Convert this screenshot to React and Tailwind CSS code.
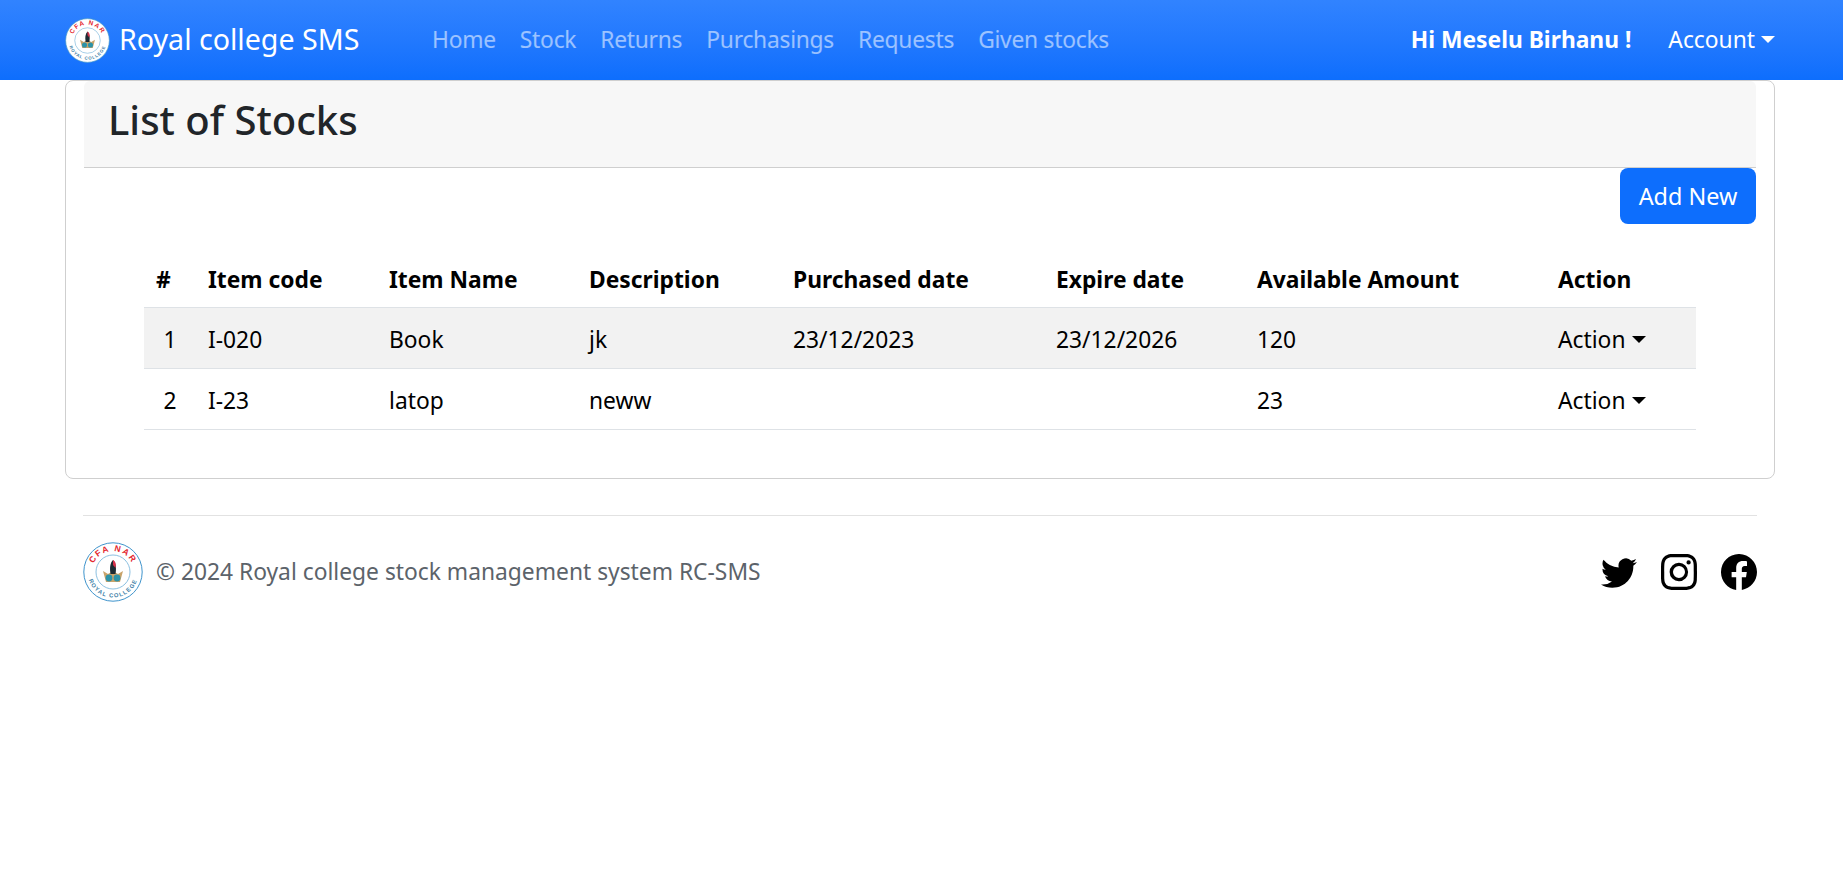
import React from 'react'

const font = "font-['Noto_Sans',sans-serif]"

const navLinks = ['Home', 'Stock', 'Returns', 'Purchasings', 'Requests', 'Given stocks']

const rows = [
  { n: 1, code: 'I-020', name: 'Book', desc: 'jk', bought: '23/12/2023', expire: '23/12/2026', amount: '120' },
  { n: 2, code: 'I-23', name: 'latop', desc: 'neww', bought: '', expire: '', amount: '23' },
]

function Caret({ className }) {
  return <span className={`inline-block ml-[6px] align-[5px] border-x-[7px] border-t-[7px] border-x-transparent ${className}`} />
}

// the college seal, drawn small; the ring text is real text on a path
function Logo({ size, id }) {
  return (
    <svg width={size} height={size} viewBox="0 0 60 60" className="shrink-0">
      <circle cx="30" cy="30" r="29.2" fill="#fff" stroke="#3f94cc" strokeWidth="1" />
      <circle cx="30" cy="30" r="17" fill="#fff" stroke="#6fb0d8" strokeWidth="0.8" />
      <defs>
        <path id={id + 'top'} d="M9 30a21 21 0 0 1 42 0" />
        <path id={id + 'bot'} d="M4.5 30a25.5 25.5 0 0 0 51 0" />
      </defs>
      <text fontSize="8.5" fontWeight="700" fill="#e3262e" fontFamily="Liberation Sans, sans-serif" letterSpacing="1.6">
        <textPath href={`#${id}top`} startOffset="50%" textAnchor="middle">CFA  NAR</textPath>
      </text>
      <text fontSize="5.8" fontWeight="700" fill="#3f7fa8" fontFamily="Liberation Sans, sans-serif" letterSpacing="1.1">
        <textPath href={`#${id}bot`} startOffset="50%" textAnchor="middle">ROYAL COLLEGE</textPath>
      </text>
      <path d="M20 29l3 11h14l3-11-5 3-5-3-5 3z" fill="#c9a36a" />
      <path d="M30 18c-3 3-3.5 8-2.5 14h5c1-6 .5-11-2.5-14z" fill="#1c2b33" />
      <path d="M30 18c2.5 1.5 3.5 4 2.5 8l-2.5-3z" fill="#d8304a" />
      <circle cx="26" cy="36" r="3.4" fill="#2c93a8" />
      <circle cx="34" cy="36" r="3.4" fill="#2c93a8" />
    </svg>
  )
}

const TwitterIcon = () => (
  <svg width="36" height="36" viewBox="0 0 16 16" fill="#000"><path d="M5.026 15c6.038 0 9.341-5.003 9.341-9.334q.002-.211-.006-.422A6.7 6.7 0 0 0 16 3.542a6.7 6.7 0 0 1-1.889.518 3.3 3.3 0 0 0 1.447-1.817 6.5 6.5 0 0 1-2.087.793A3.286 3.286 0 0 0 7.875 6.03a9.32 9.32 0 0 1-6.767-3.429 3.29 3.29 0 0 0 1.018 4.382A3.3 3.3 0 0 1 .64 6.575v.045a3.29 3.29 0 0 0 2.632 3.218 3.2 3.2 0 0 1-.865.115 3 3 0 0 1-.614-.057 3.28 3.28 0 0 0 3.067 2.277A6.6 6.6 0 0 1 .78 13.58a6 6 0 0 1-.78-.045A9.34 9.34 0 0 0 5.026 15" /></svg>
)

const InstagramIcon = () => (
  <svg width="36" height="36" viewBox="0 0 16 16" fill="#000"><path d="M8 0C5.829 0 5.556.01 4.703.048 3.85.088 3.269.222 2.76.42a3.9 3.9 0 0 0-1.417.923A3.9 3.9 0 0 0 .42 2.76C.222 3.268.087 3.85.048 4.7.01 5.555 0 5.827 0 8.001c0 2.172.01 2.444.048 3.297.04.852.174 1.433.372 1.942.205.526.478.972.923 1.417.444.445.89.719 1.416.923.51.198 1.09.333 1.942.372C5.555 15.99 5.827 16 8 16s2.444-.01 3.298-.048c.851-.04 1.434-.174 1.943-.372a3.9 3.9 0 0 0 1.416-.923c.445-.445.718-.891.923-1.417.197-.509.332-1.09.372-1.942C15.99 10.445 16 10.173 16 8s-.01-2.445-.048-3.299c-.04-.851-.175-1.433-.372-1.941a3.9 3.9 0 0 0-.923-1.417A3.9 3.9 0 0 0 13.24.42c-.51-.198-1.092-.333-1.943-.372C10.443.01 10.172 0 7.998 0zm-.717 1.442h.718c2.136 0 2.389.007 3.232.046.78.035 1.204.166 1.486.275.373.145.64.319.92.599s.453.546.598.92c.11.281.24.705.275 1.485.039.843.047 1.096.047 3.231s-.008 2.389-.047 3.232c-.035.78-.166 1.203-.275 1.485a2.5 2.5 0 0 1-.599.919c-.28.28-.546.453-.92.598-.28.11-.704.24-1.485.276-.843.038-1.096.047-3.232.047s-2.39-.009-3.233-.047c-.78-.036-1.203-.166-1.485-.276a2.5 2.5 0 0 1-.92-.598 2.5 2.5 0 0 1-.6-.92c-.109-.281-.24-.705-.275-1.485-.038-.843-.046-1.096-.046-3.233s.008-2.388.046-3.231c.036-.78.166-1.204.276-1.486.145-.373.319-.64.599-.92s.546-.453.92-.598c.282-.11.705-.24 1.485-.276.738-.034 1.024-.044 2.515-.045zm4.988 1.328a.96.96 0 1 0 0 1.92.96.96 0 0 0 0-1.92m-4.27 1.122a4.109 4.109 0 1 0 0 8.217 4.109 4.109 0 0 0 0-8.217m0 1.441a2.667 2.667 0 1 1 0 5.334 2.667 2.667 0 0 1 0-5.334" /></svg>
)

const FacebookIcon = () => (
  <svg width="36" height="36" viewBox="0 0 16 16" fill="#000"><path d="M16 8.049c0-4.446-3.582-8.05-8-8.05C3.58 0-.002 3.603-.002 8.05c0 4.017 2.926 7.347 6.75 7.951v-5.625h-2.03V8.05H6.75V6.275c0-2.017 1.195-3.131 3.022-3.131.876 0 1.791.157 1.791.157v1.98h-1.009c-.993 0-1.303.621-1.303 1.258v1.51h2.218l-.354 2.326H9.25V16c3.824-.604 6.75-3.934 6.75-7.951" /></svg>
)

const cell = 'px-[12px] pt-[17px] pb-[13px]'

export default function App() {
  return (
    <div className={`${font} min-h-[891px] bg-white text-[22.8px] leading-[30px] text-black`}>
      <nav className="h-[80px] flex items-center pl-[65px] pr-[68px] bg-gradient-to-b from-[#3183ff] to-[#0d6efd]">
        <Logo size={45} id="nav" />
        <span className="ml-[9px] pb-[2px] text-[28.6px] text-white w-[313px]">Royal college SMS</span>
        <div className="flex gap-[24px] tracking-[-0.25px] text-white/55">
          {navLinks.map(l => <a key={l}>{l}</a>)}
        </div>
        <b className="ml-auto text-white font-bold">Hi Meselu Birhanu !</b>
        <span className="ml-[37px] text-white">Account<Caret className="border-t-white" /></span>
      </nav>

      <main className="ml-[65px] mr-[68px] h-[399px] border border-[#cfcfcf] rounded-[8px] px-[18px]">
        <header className="h-[87px] bg-[#f7f7f7] border-b border-[#cfcfcf] rounded-t-[6px] px-[24px] pb-[8px] flex items-center">
          <h1 className="text-[40px] leading-[48px] font-medium text-[#212529]">List of Stocks</h1>
        </header>
        <div className="flex justify-end">
          <button className="w-[136px] h-[56px] rounded-[8px] bg-[#0d6efd] text-white text-[23.4px]">Add New</button>
        </div>
        <div className="mx-[60px] mt-[23px]">
          <table className="w-full table-fixed border-collapse">
            <colgroup>
              <col className="w-[52px]" /><col className="w-[181px]" /><col className="w-[200px]" /><col className="w-[204px]" />
              <col className="w-[263px]" /><col className="w-[201px]" /><col className="w-[301px]" /><col className="w-[150px]" />
            </colgroup>
            <thead>
              <tr className="border-b border-[#dee2e6] text-left">
                {['#', 'Item code', 'Item Name', 'Description', 'Purchased date', 'Expire date', 'Available Amount', 'Action'].map(h => (
                  <th key={h} className="px-[12px] pt-[18px] pb-[12px] font-bold whitespace-nowrap">{h}</th>
                ))}
              </tr>
            </thead>
            <tbody>
              {rows.map(r => (
                <tr key={r.n} className={`border-b border-[#dee2e6] ${r.n === 1 ? 'bg-[#f2f2f2]' : ''}`}>
                  <td className={`${cell} text-center`}>{r.n}</td>
                  <td className={cell}>{r.code}</td>
                  <td className={cell}>{r.name}</td>
                  <td className={cell}>{r.desc}</td>
                  <td className={cell}>{r.bought}</td>
                  <td className={cell}>{r.expire}</td>
                  <td className={cell}>{r.amount}</td>
                  <td className={`${cell} whitespace-nowrap`}>Action<Caret className="border-t-black" /></td>
                </tr>
              ))}
            </tbody>
          </table>
        </div>
      </main>

      <footer className="ml-[83px] mr-[86px] mt-[36px] border-t border-[#e2e2e2] pt-[26px] flex items-center justify-between">
        <div className="flex items-center gap-[13px]">
          <Logo size={60} id="foot" />
          <span className="text-[#5c636a]">© 2024 Royal college stock management system RC-SMS</span>
        </div>
        <div className="flex items-center gap-[24px]">
          <TwitterIcon />
          <InstagramIcon />
          <FacebookIcon />
        </div>
      </footer>
    </div>
  )
}
